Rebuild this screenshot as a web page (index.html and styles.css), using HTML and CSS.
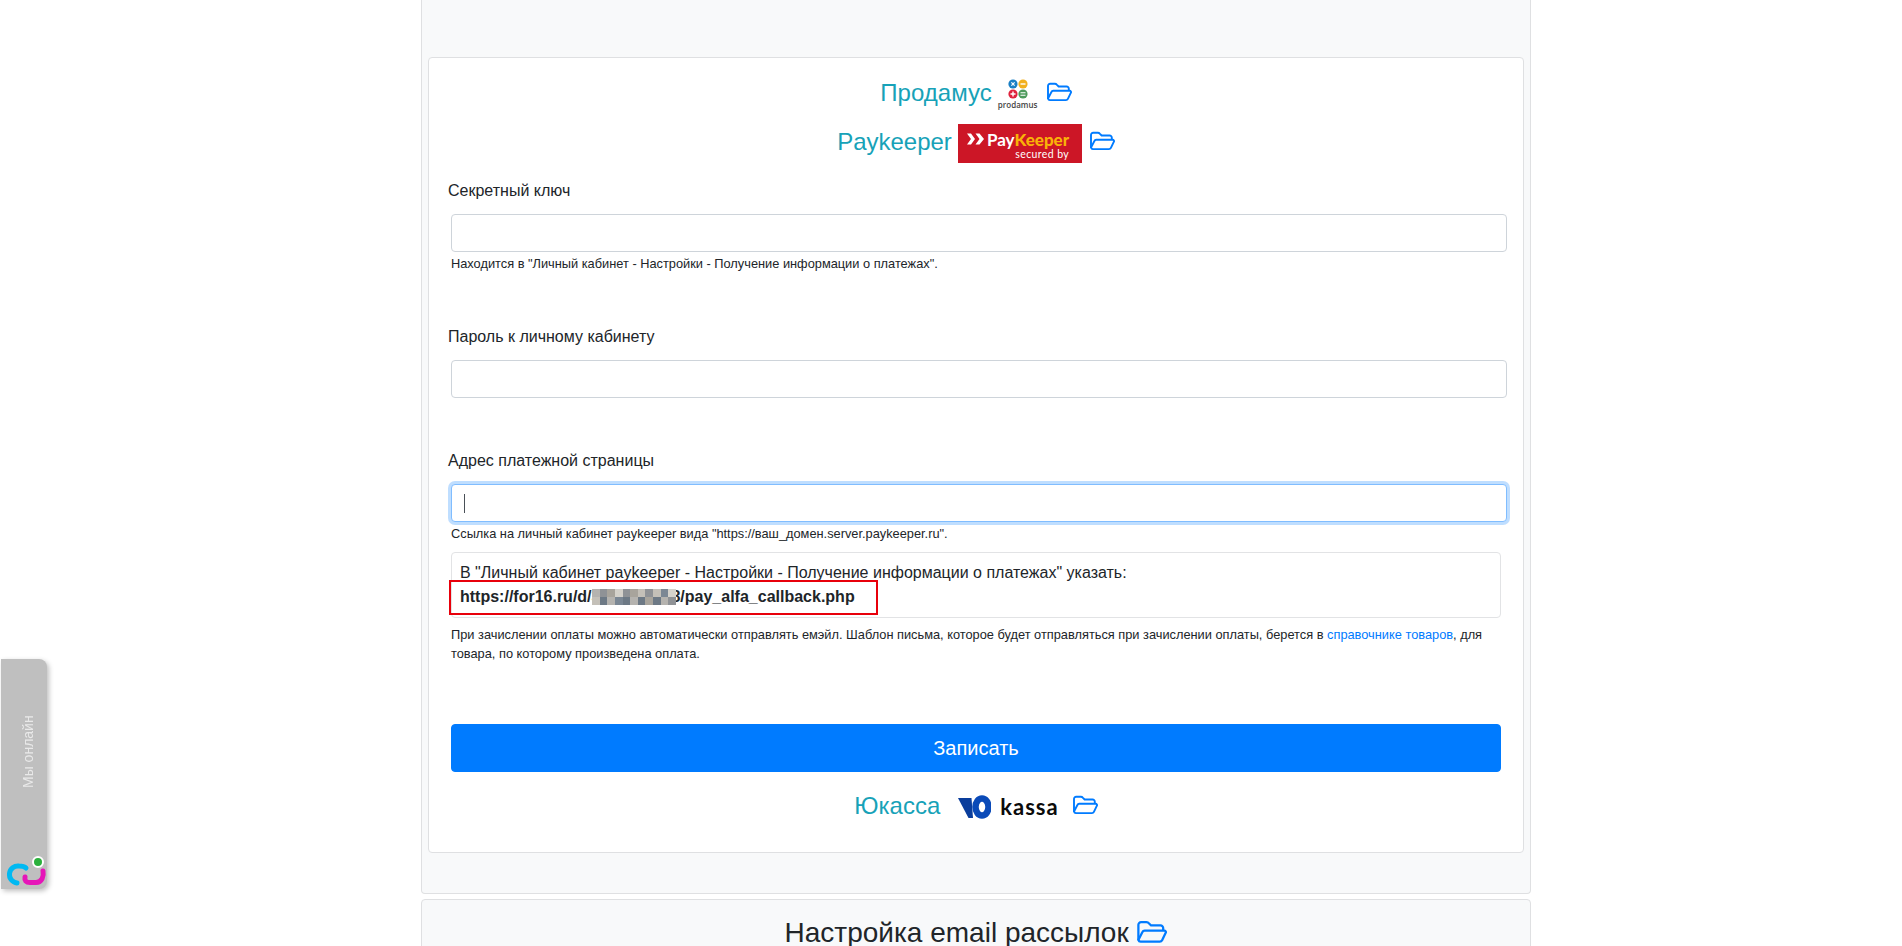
FILE: index.html
```html
<!DOCTYPE html>
<html lang="ru">
<head>
  <meta charset="UTF-8" />
  <meta name="viewport" content="width=device-width, initial-scale=1.0"/>
  <title>Настройки оплаты</title>
  <link rel="stylesheet" href="styles.css">
</head>
<body>

  <svg class="sprite" width="0" height="0">
    <symbol id="folder" viewBox="0 0 26 20">
      <path d="M2 17V4a2.2 2.2 0 0 1 2.2-2.2h4.6a3 3 0 0 1 2.2 1l1.6 1.7h8a2.2 2.2 0 0 1 2.2 2.2v1.6" fill="none" stroke="currentColor" stroke-width="1.9"/>
      <path d="M2 16.6l3.4-6.6a2 2 0 0 1 1.8-1.2h16.5a1.3 1.3 0 0 1 1.2 1.9l-3 6.2a2.2 2.2 0 0 1-2 1.2H4a2 2 0 0 1-2-1.5z" fill="none" stroke="currentColor" stroke-width="1.9" stroke-linejoin="round"/>
    </symbol>
  </svg>

  <main class="page">
    <section class="card card-settings">
      <div class="card-inner">

        <h4 class="pay-title">
          <span>Продамус</span>
          <span class="logo-prodamus">
            <svg class="dots" viewBox="0 0 20 20">
              <circle cx="5" cy="5" r="4.6" fill="#1a7fc4"/>
              <path d="M3.4 3.4l3.2 3.2M6.6 3.4L3.4 6.6" stroke="#fff" stroke-width="1.2"/>
              <circle cx="15" cy="5" r="4.6" fill="#f2b01e"/>
              <path d="M12.5 5h5" stroke="#fff" stroke-width="1.4"/>
              <circle cx="5" cy="15" r="4.6" fill="#e0223c"/>
              <path d="M2.5 15h5M5 12.5v5" stroke="#fff" stroke-width="1.4"/>
              <circle cx="15" cy="15" r="4.6" fill="#4e9a5c"/>
              <path d="M12.5 13.8h5M12.5 16.2h5" stroke="#fff" stroke-width="1.1"/>
            </svg>
            <span class="logo-prodamus-text">prodamus</span>
          </span>
          <svg class="folder"><use href="#folder"/></svg>
        </h4>

        <h4 class="pay-title pay-title-keeper">
          <span>Paykeeper</span>
          <span class="logo-keeper">
            <svg class="chevrons" viewBox="0 0 17 11">
              <path d="M0 0h4l4 5.5L4 11H0l4-5.5zM8.5 0h4l4.5 5.5L12.5 11h-4l4-5.5z" fill="#fff"/>
            </svg>
            <span class="logo-keeper-text">
              <span class="logo-keeper-name">Pay<b>Keeper</b></span>
              <span class="logo-keeper-sub">secured by</span>
            </span>
          </span>
          <svg class="folder"><use href="#folder"/></svg>
        </h4>

        <div class="field">
          <label class="field-label">Секретный ключ</label>
          <input class="input" type="text">
          <small class="hint">Находится в "Личный кабинет - Настройки - Получение информации о платежах".</small>
        </div>

        <div class="field field-nohint">
          <label class="field-label">Пароль к личному кабинету</label>
          <input class="input" type="text">
        </div>

        <div class="field">
          <label class="field-label">Адрес платежной страницы</label>
          <div class="input input-focus"><span class="caret"></span></div>
          <small class="hint">Ссылка на личный кабинет paykeeper вида "https://ваш_домен.server.paykeeper.ru".</small>
        </div>

        <div class="note">
          В "Личный кабинет paykeeper - Настройки - Получение информации о платежах" указать:<br>
          <b class="callback">https://for16.ru/d/3<svg class="mosaic" viewBox="0 0 11 2" preserveAspectRatio="none" shape-rendering="crispEdges">
            <rect x="0" y="0" width="1" height="1" fill="#b5b3af"/><rect x="1" y="0" width="1" height="1" fill="#8f9296"/><rect x="2" y="0" width="1" height="1" fill="#a8a49c"/><rect x="3" y="0" width="1" height="1" fill="#d5d2cb"/><rect x="4" y="0" width="1" height="1" fill="#8f9296"/><rect x="5" y="0" width="1" height="1" fill="#a8a49c"/><rect x="6" y="0" width="1" height="1" fill="#c4c0b8"/><rect x="7" y="0" width="1" height="1" fill="#8f9296"/><rect x="8" y="0" width="1" height="1" fill="#c4c0b8"/><rect x="9" y="0" width="1" height="1" fill="#7b8794"/><rect x="10" y="0" width="1" height="1" fill="#d5d2cb"/>
            <rect x="0" y="1" width="1" height="1" fill="#c4c0b8"/><rect x="1" y="1" width="1" height="1" fill="#6d7985"/><rect x="2" y="1" width="1" height="1" fill="#b5b3af"/><rect x="3" y="1" width="1" height="1" fill="#7b8794"/><rect x="4" y="1" width="1" height="1" fill="#6d7985"/><rect x="5" y="1" width="1" height="1" fill="#b5b3af"/><rect x="6" y="1" width="1" height="1" fill="#6d7985"/><rect x="7" y="1" width="1" height="1" fill="#a8a49c"/><rect x="8" y="1" width="1" height="1" fill="#6d7985"/><rect x="9" y="1" width="1" height="1" fill="#b5b3af"/><rect x="10" y="1" width="1" height="1" fill="#8f9296"/>
          </svg>8/pay_alfa_callback.php</b>
          <span class="red-frame"></span>
        </div>

        <small class="hint hint-long">При зачислении оплаты можно автоматически отправлять емэйл. Шаблон письма, которое будет отправляться при зачислении оплаты, берется в <a href="#">справочнике товаров</a>, для товара, по которому произведена оплата.</small>

        <button class="btn-save" type="button">Записать</button>

        <h4 class="pay-title pay-title-kassa">
          <span>Юкасса</span>
          <span class="logo-kassa">
            <svg class="kassa-mark" viewBox="0 0 33 24">
              <path d="M0 3h13.500l1.500 20h-4.500z" fill="#0a3d9c"/>
              <ellipse cx="24" cy="12" rx="6.500" ry="8.500" fill="none" stroke="#0a4ab8" stroke-width="6.500"/>
            </svg>
            <span class="kassa-text">kassa</span>
          </span>
          <svg class="folder"><use href="#folder"/></svg>
        </h4>

      </div>
    </section>

    <section class="card card-next">
      <h3 class="next-title">Настройка email рассылок <svg class="folder"><use href="#folder"/></svg></h3>
    </section>
  </main>

  <aside class="online">
    <span class="online-text">Мы онлайн</span>
    <svg class="online-logo" viewBox="0 0 44 34">
      <path d="M20 12q-2-2-7-2a8.500 8.500 0 0 0-2 17" fill="none" stroke="#00b9f2" stroke-width="5" stroke-linecap="round"/>
      <path d="M19 21q-1 5.500 5 5.500h6c6 0 8-6.500 7-11.500" fill="none" stroke="#e615b8" stroke-width="5" stroke-linecap="round"/>
      <circle cx="32" cy="6" r="5" fill="#2bb13c" stroke="#fff" stroke-width="2"/>
    </svg>
  </aside>

</body>
</html>
```

FILE: styles.css
```css
* {
  box-sizing: border-box;
}

body {
  margin: 0;
  height: 946px;
  overflow: hidden;
  background: #fff;
  color: #212529;
  font-family: "Liberation Sans", Arial, sans-serif;
  font-size: 16px;
  line-height: 1.5;
}

.sprite {
  position: absolute;
}

.page {
  width: 1110px;
  margin-left: 421px;
}

.card {
  background: #f8f9fa;
  border: 1px solid #dfe0e2;
  border-radius: 4px;
}

.card-settings {
  height: 894px;
  padding: 57px 6px 0;
  border-top: 0;
  border-radius: 0 0 4px 4px;
}

.card-inner {
  height: 796px;
  padding: 0 18px 0 18px;
  background: #fff;
  border: 1px solid #dfe0e2;
  border-radius: 4px;
}

/* payment system headings */
.pay-title {
  display: flex;
  align-items: center;
  justify-content: center;
  height: 32px;
  margin: 19px 0 0;
  font-size: 24px;
  font-weight: 400;
  line-height: 1.2;
  color: #17a2b8;
}

.pay-title-keeper {
  height: 40px;
  margin-top: 14px;
}

.pay-title-keeper > span:first-child {
  margin-bottom: 2px;
}

.folder {
  width: 26px;
  height: 20px;
  color: #007bff;
  flex: none;
}

.pay-title .folder {
  margin-bottom: 3px;
}

.pay-title-keeper .folder {
  margin-bottom: 5px;
}

.logo-prodamus {
  display: flex;
  flex-direction: column;
  align-items: center;
  width: 40px;
  margin: 0 8px 0 6px;
  padding-top: 3px;
}

.dots {
  width: 20px;
  height: 20px;
}

.logo-prodamus-text {
  margin-top: 1px;
  font-family: "Open Sans", sans-serif;
  font-size: 8px;
  font-weight: 600;
  line-height: 10px;
  color: #444;
}

.logo-keeper {
  display: flex;
  align-items: flex-start;
  width: 124px;
  height: 39px;
  margin: 0 7px 0 6px;
  padding: 8px 0 0 9px;
  background: #cc1626;
  color: #fff;
}

.chevrons {
  width: 17px;
  height: 12px;
  margin-top: 1px;
  flex: none;
}

.logo-keeper-text {
  display: flex;
  flex-direction: column;
  align-items: flex-end;
  margin-left: 3px;
  font-family: Lato, sans-serif;
}

.logo-keeper-name {
  font-size: 17px;
  font-weight: 700;
  line-height: 16px;
  white-space: nowrap;
}

.logo-keeper-name b {
  color: #f9b208;
}

.logo-keeper-sub {
  margin-top: 1px;
  font-size: 10.5px;
  font-weight: 400;
  line-height: 11px;
  letter-spacing: .4px;
}

.pay-title-kassa {
  margin-top: 18px;
}

.logo-kassa {
  display: flex;
  align-items: center;
  margin: 2px 13px 0 18px;
}

.kassa-mark {
  width: 33px;
  height: 24px;
}

.kassa-text {
  margin-left: 9px;
  font-family: Lato, sans-serif;
  font-size: 22px;
  font-weight: 700;
  line-height: 24px;
  letter-spacing: 1px;
  color: #0b0b0b;
}

/* form */
.field {
  margin-top: 16px;
}

.field + .field {
  margin-top: 52px;
}

.field-nohint + .field {
  margin-top: 51px;
}

.field-label {
  display: block;
  margin-left: 1px;
  margin-bottom: 11px;
}

.input {
  display: block;
  width: 1056px;
  height: 38px;
  margin-left: 4px;
  padding: 6px 12px;
  background: #fff;
  border: 1px solid #ced4da;
  border-radius: 4px;
  font: inherit;
}

.input-focus {
  display: flex;
  align-items: center;
  border-color: #80bdff;
  box-shadow: 0 0 0 3px rgba(0, 123, 255, .25);
}

.caret {
  width: 1px;
  height: 19px;
  background: #495057;
}

.hint {
  display: block;
  margin: 2px 0 0 4px;
  font-size: 12.8px;
  line-height: 19px;
}

.hint-long {
  width: 1050px;
  margin-top: 7px;
}

.hint a {
  color: #007bff;
  text-decoration: none;
}

.note {
  position: relative;
  width: 1050px;
  height: 66px;
  margin: 9px 0 0 4px;
  padding: 8px 8px;
  background: #fff;
  border: 1px solid #e2e3e5;
  border-radius: 4px;
}

.callback {
  font-weight: 700;
}

/* blurred part of the link, lies over the digits on both sides */
.mosaic {
  position: relative;
  width: 84px;
  height: 16px;
  margin: 0 -5px 0 -8px;
  vertical-align: -3px;
}

/* annotation drawn over the screenshot */
.red-frame {
  position: absolute;
  left: -3px;
  top: 27px;
  width: 429px;
  height: 35px;
  border: 2px solid #e8000b;
}

.btn-save {
  display: block;
  width: 1050px;
  height: 48px;
  margin: 61px 0 0 4px;
  background: #007bff;
  border: 1px solid #007bff;
  border-radius: 4px;
  color: #fff;
  font: inherit;
  font-size: 20px;
}

.card-next {
  height: 80px;
  margin-top: 5px;
  text-align: center;
}

.next-title {
  margin: 16px 0 0;
  font-size: 28px;
  font-weight: 400;
  line-height: 1.2;
}

.next-title .folder {
  width: 31px;
  height: 24px;
  vertical-align: -2px;
}

/* chat widget stuck to the left edge of the window */
.online {
  position: fixed;
  left: 1px;
  top: 659px;
  width: 46px;
  height: 230px;
  display: flex;
  justify-content: center;
  background: #bfbfbf;
  border-radius: 0 8px 8px 0;
  box-shadow: 2px 2px 5px rgba(0, 0, 0, .25);
}

.online-text {
  margin: 54px 0 0 8px;
  height: 75px;
  writing-mode: vertical-rl;
  transform: rotate(180deg);
  font-size: 14px;
  line-height: 20px;
  color: #e9e9e9;
  white-space: nowrap;
}

.online-logo {
  position: absolute;
  left: 5px;
  bottom: -1px;
  width: 44px;
  height: 34px;
}
```
